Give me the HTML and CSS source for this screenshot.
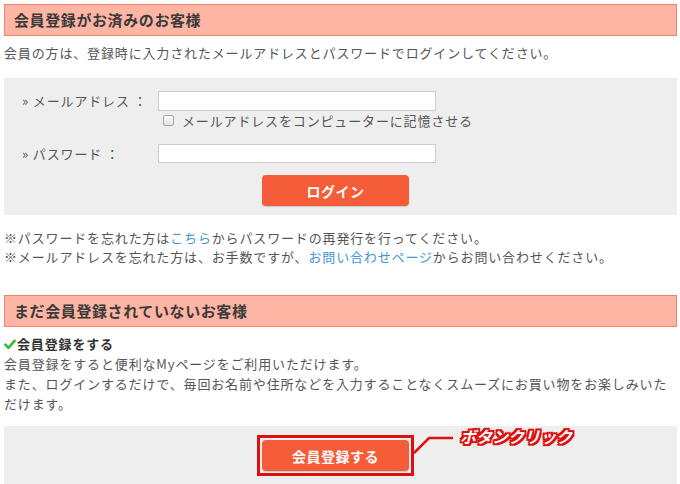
FILE: index.html
```html
<!DOCTYPE html>
<html lang="ja">
<head>
    <meta charset="UTF-8">
    <title>ログイン</title>
    <link rel="stylesheet" href="styles.css">
</head>
<body>

    <div class="page">
        <h2 class="section-title">会員登録がお済みのお客様</h2>
        <p class="lead">会員の方は、登録時に入力されたメールアドレスとパスワードでログインしてください。</p>

        <form class="login-box">
            <div class="row">
                <label class="row-label" for="email">» メールアドレス ：</label>
                <div class="row-field">
                    <input type="text" id="email" class="text-input">
                    <label class="remember"><input type="checkbox" class="check">メールアドレスをコンピューターに記憶させる</label>
                </div>
            </div>
            <div class="row row-pass">
                <label class="row-label" for="pass">» パスワード ：</label>
                <div class="row-field">
                    <input type="password" id="pass" class="text-input">
                </div>
            </div>
            <button type="button" class="btn btn-login">ログイン</button>
        </form>

        <div class="notes">
            <p>※パスワードを忘れた方は<a href="#">こちら</a>からパスワードの再発行を行ってください。</p>
            <p>※メールアドレスを忘れた方は、お手数ですが、<a href="#">お問い合わせページ</a>からお問い合わせください。</p>
        </div>

        <h2 class="section-title title-second">まだ会員登録されていないお客様</h2>
        <div class="register-text">
            <p class="register-head">
                <svg class="check-icon" width="12" height="11" viewBox="0 0 12 11"><path d="M1.5 5.8 L4.5 8.8 L10.5 1.8" fill="none" stroke="#3dbb3d" stroke-width="2.8" stroke-linecap="round" stroke-linejoin="round"/></svg>会員登録をする
            </p>
            <p>会員登録をすると便利なMyページをご利用いただけます。</p>
            <p>また、ログインするだけで、毎回お名前や住所などを入力することなくスムーズにお買い物をお楽しみいただけます。</p>
        </div>

        <div class="register-box">
            <div class="highlight">
                <button type="button" class="btn btn-register">会員登録する</button>
            </div>
            <!-- callout -->
            <svg class="callout-line" width="40" height="20" viewBox="0 0 40 20">
                <polyline points="1,18 16,3 40,3" fill="none" stroke="#dd0f0f" stroke-width="2.5"/>
            </svg>
            <span class="callout-text">ボタンクリック</span>
        </div>
    </div>

</body>
</html>
```

FILE: styles.css
```css
* {
    box-sizing: border-box;
}
body {
    margin: 0;
    font-family: "Noto Sans CJK JP", "Noto Sans", sans-serif;
    font-size: 13px;
    letter-spacing: 0.85px;
    color: #555;
    background: #fff;
}
p {
    margin: 0;
}
.page {
    width: 673px;
    margin-left: 4px;
    padding-top: 4px;
}
.section-title {
    margin: 0;
    height: 32px;
    line-height: 30px;
    padding-left: 9px;
    font-size: 15px;
    letter-spacing: 0.6px;
    font-weight: bold;
    color: #3a3a3a;
    background-color: #ffb5a3;
    border: 1px solid #f2846e;
}
.lead {
    margin-top: 7px;
    line-height: 20px;
}
.login-box {
    margin-top: 15px;
    background-color: #eeeeee;
    padding: 13px 0 8px 18px;
    height: 137px;
}
.row {
    display: flex;
}
.row-label {
    width: 136px;
    line-height: 20px;
    color: #555;
}
.row-field {
    display: flex;
    flex-direction: column;
}
.text-input {
    width: 278px;
    height: 20px;
    margin: 0;
    border: 1px solid #ccc;
    background: #fff;
}
.remember {
    display: flex;
    align-items: center;
    height: 17px;
    margin-top: 1px;
    padding-left: 5px;
}
.check {
    appearance: none;
    -webkit-appearance: none;
    width: 11px;
    height: 11px;
    margin: 0 8px 0 0;
    border: 1px solid #a5a5a5;
    border-radius: 2px;
    background: linear-gradient(#fdfdfd, #e2e2e2);
}
.row-pass {
    margin-top: 15px;
}
.row-pass .text-input {
    height: 19px;
}
.btn {
    display: block;
    width: 147px;
    height: 31px;
    border: none;
    border-radius: 4px;
    background-color: #f55c38;
    color: #fff;
    font-family: inherit;
    font-size: 14px;
    font-weight: bold;
    letter-spacing: 0.5px;
    cursor: pointer;
    box-shadow: 0 1px 1px rgba(0,0,0,0.15);
}
.btn-login {
    margin: 11px 0 0 240px;
}
.notes {
    margin-top: 13px;
    line-height: 19px;
}
.notes a {
    color: #4196d6;
    text-decoration: none;
}
.title-second {
    margin-top: 29px;
}
.register-text {
    margin-top: 7px;
    line-height: 20px;
}
.register-head {
    font-weight: bold;
    color: #333;
    display: flex;
    align-items: center;
}
.check-icon {
    margin-right: 1px;
}
.register-box {
    position: relative;
    margin-top: 12px;
    height: 60px;
    background-color: #eeeeee;
    padding: 9px 0 0 253px;
}
.highlight {
    width: 157px;
    height: 41px;
    border: 3px solid #dd0f0f;
    padding: 2px;
}
.btn-register {
    height: 31px;
}
.callout-line {
    position: absolute;
    left: 409px;
    top: 9px;
}
.callout-text {
    position: absolute;
    left: 456px;
    top: -2px;
    font-size: 16px;
    font-weight: bold;
    font-style: italic;
    letter-spacing: 0;
    color: #fff;
    text-shadow:
        1px 0 0 #dd0f0f, -1px 0 0 #dd0f0f, 0 1px 0 #dd0f0f, 0 -1px 0 #dd0f0f,
        1px 1px 0 #dd0f0f, -1px -1px 0 #dd0f0f, 1px -1px 0 #dd0f0f, -1px 1px 0 #dd0f0f,
        2px 0 0 #dd0f0f, -2px 0 0 #dd0f0f, 0 2px 0 #dd0f0f, 0 -2px 0 #dd0f0f,
        2px 2px 0 #dd0f0f, -2px -2px 0 #dd0f0f, 2px -2px 0 #dd0f0f, -2px 2px 0 #dd0f0f;
}
```
